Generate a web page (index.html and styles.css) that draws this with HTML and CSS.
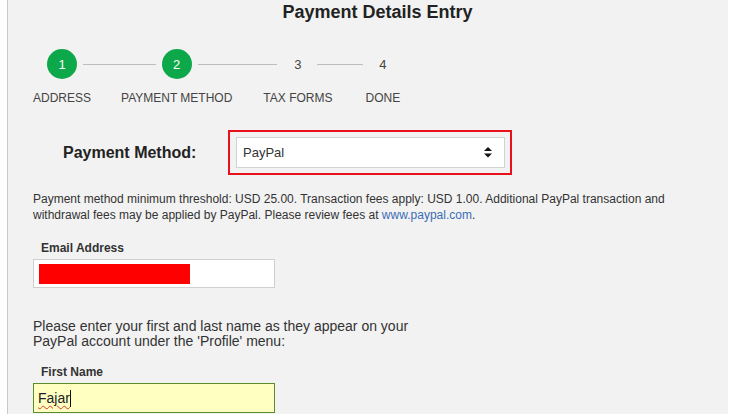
FILE: index.html
```html
<!DOCTYPE html>
<html>
<head>
<meta charset="utf-8">
<link rel="stylesheet" href="styles.css">
</head>
<body>
<div class="panel">
  <h1 class="title">Payment Details Entry</h1>
  <div class="steps">
    <div class="step step-1">
      <span class="marker done">1</span>
      <span class="label">ADDRESS</span>
    </div>
    <div class="step step-2">
      <span class="marker done">2</span>
      <span class="label">PAYMENT METHOD</span>
    </div>
    <div class="step step-3">
      <span class="marker">3</span>
      <span class="label">TAX FORMS</span>
    </div>
    <div class="step step-4">
      <span class="marker">4</span>
      <span class="label">DONE</span>
    </div>
  </div>

  <div class="method-row">
    <span class="method-label">Payment Method:</span>
    <div class="highlight">
      <div class="select">
        <span>PayPal</span>
        <svg class="arrows" width="8" height="11" viewBox="0 0 8 11"><path d="M4 0 L8 4 L0 4 Z M0 6.5 L8 6.5 L4 10.5 Z" fill="#111"/></svg>
      </div>
    </div>
  </div>

  <p class="info">Payment method minimum threshold: USD 25.00. Transaction fees apply: USD 1.00. Additional PayPal transaction and withdrawal fees may be applied by PayPal. Please review fees at <a class="link" href="#">www.paypal.com</a>.</p>

  <div class="field email-field">
    <label class="field-label">Email Address</label>
    <div class="input"><span class="redact"></span></div>
  </div>

  <p class="note">Please enter your first and last name as they appear on your PayPal account under the 'Profile' menu:</p>

  <div class="field name-field">
    <label class="field-label">First Name</label>
    <div class="input active"><span class="typed">Fajar</span><span class="caret"></span></div>
  </div>
</div>
</body>
</html>
```
FILE: styles.css
```css
html, body {
  margin: 0;
  padding: 0;
  background: #fff;
  font-family: "Liberation Sans", Arial, sans-serif;
  color: #333;
}
.panel {
  margin-left: 7px;
  width: 695px;
  height: 414px;
  overflow: hidden;
  border-left: 1px solid #c8c8c8;
  background: #f2f2f2;
  padding: 0 0 0 25px;
  box-sizing: content-box;
}
.title {
  margin: 0;
  font-size: 18px;
  line-height: 24px;
  font-weight: bold;
  text-align: center;
  width: 689px;
  color: #222;
}
.steps {
  display: flex;
  gap: 30px;
  margin-top: 25px;
}
.step {
  position: relative;
  display: flex;
  flex-direction: column;
  align-items: center;
  gap: 12px;
}
.step-3 { margin-left: 1px; }
.step-4 { margin-left: 3px; }
.marker {
  width: 30px;
  height: 30px;
  border-radius: 50%;
  display: flex;
  align-items: center;
  justify-content: center;
  font-size: 13px;
  line-height: 13px;
  color: #444;
}
.marker.done {
  background: #0da84a;
  color: #fff;
}
.step::after {
  content: "";
  position: absolute;
  top: 15px;
  left: calc(50% + 21px);
  height: 1px;
  background: #bdbdbd;
}
.step-1::after { width: 73px; }
.step-2::after { width: 79px; }
.step-3::after { width: 46px; left: calc(50% + 19px); }
.step-4::after { display: none; }
.label {
  font-size: 12px;
  line-height: 14px;
  color: #444;
  white-space: nowrap;
}
.method-row {
  display: flex;
  align-items: center;
  margin-top: 25px;
  padding-left: 30px;
  gap: 32px;
}
.method-label {
  font-size: 16px;
  font-weight: bold;
  color: #222;
  width: 133px;
  white-space: nowrap;
}
.highlight {
  border: 2px solid #e8101a;
  padding: 5px 5px 5px 6px;
}
.select {
  width: 269px;
  height: 31px;
  box-sizing: border-box;
  background: #fff;
  border: 1px solid #d2d2d2;
  display: flex;
  align-items: center;
  justify-content: space-between;
  padding: 0 12px 0 6px;
  font-size: 13px;
  color: #333;
}
.arrows { display: block; }
.info {
  margin: 16px 0 0;
  font-size: 12px;
  line-height: 16px;
  max-width: 660px;
  color: #333;
}
.link {
  color: #3b6db4;
  text-decoration: none;
}
.field {
  display: flex;
  flex-direction: column;
  align-items: flex-start;
}
.email-field { margin-top: 18px; }
.name-field { margin-top: 16px; }
.field-label {
  font-size: 12px;
  line-height: 15px;
  font-weight: bold;
  color: #333;
  padding-left: 8px;
  margin-bottom: 3px;
}
.input {
  width: 242px;
  height: 29px;
  box-sizing: border-box;
  background: #fff;
  border: 1px solid #cfcfcf;
  padding: 3px 5px;
  display: flex;
  align-items: center;
}
.redact {
  display: block;
  width: 151px;
  height: 20px;
  background: #ff0000;
}
.note {
  margin: 31px 0 0;
  font-size: 14px;
  line-height: 15px;
  max-width: 400px;
  color: #333;
}
.input.active {
  height: 30px;
  background: #ffffc2;
  border: 1px solid #5d8c2c;
  padding: 0 4px;
  font-size: 14px;
  color: #222;
}
.typed {
  text-decoration: underline wavy #e03030;
  text-decoration-thickness: 1px;
  text-underline-offset: 2px;
}
.caret {
  display: inline-block;
  width: 1px;
  height: 17px;
  background: #111;
}
```
